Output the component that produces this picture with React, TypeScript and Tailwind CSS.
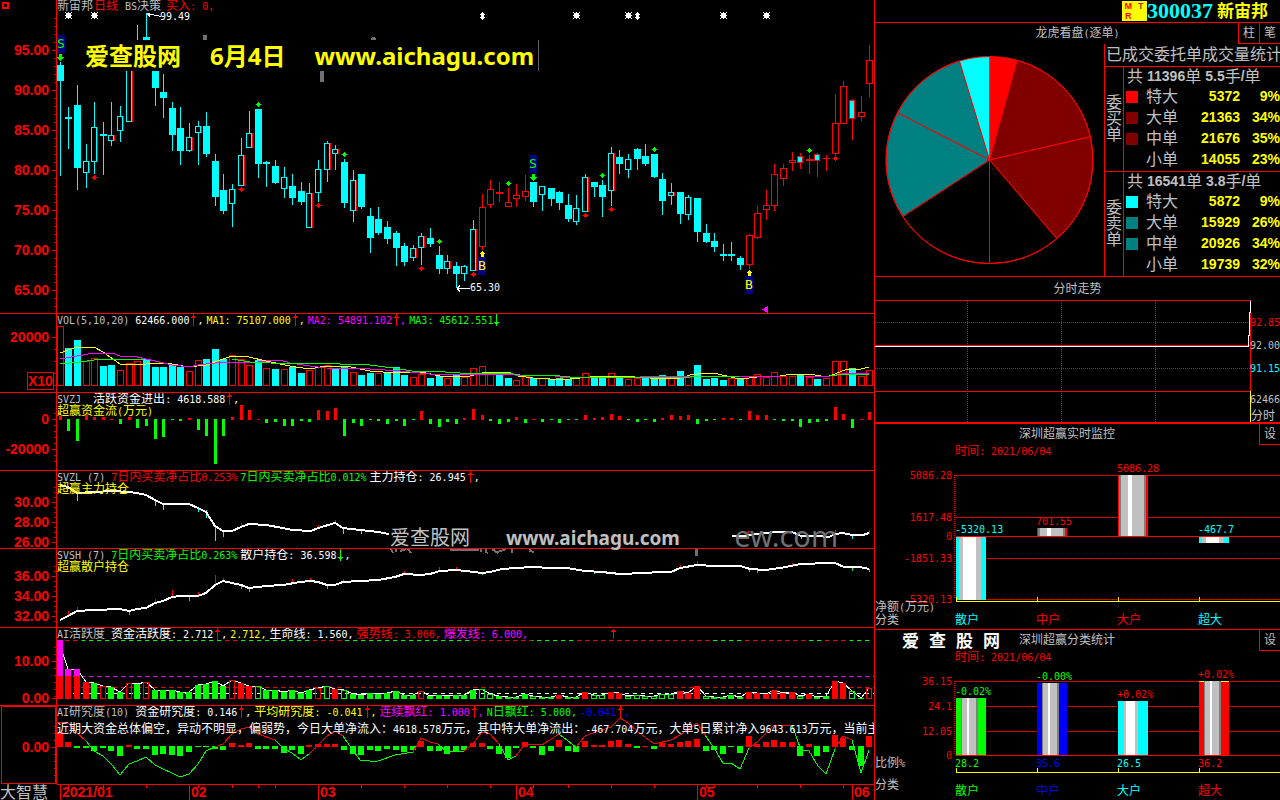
import React from 'react';

const RED = '#ff0000';
const CYAN = '#00ffff';
const LIME = '#00ff00';
const YELLOW = '#ffff00';
const MAGENTA = '#ff00ff';
const SILVER = '#c0c0c0';

// left edge and width of the plot area, in chart units
const PLOT_X = 57;
const PLOT_W = 817;

const barX = (i: number) => Math.floor(60.3 + i * 8.61);

type Kind = 'd' | 'u' | 'r' | 'm';
type Candle = [Kind, number, number, number, number];

// kind, high, body top, body bottom, low
const CANDLES: Candle[] = [
  ['d', 62, 65, 81, 176], ['d', 107, 117, 119, 149], ['d', 85, 105, 168, 190], ['u', 144, 161, 173, 188],
  ['u', 102, 127, 162, 174], ['d', 122, 134, 136, 175], ['u', 102, 135, 141, 146], ['u', 106, 116, 131, 142],
  ['u', 60, 66, 122, 122], ['d', 25, 45, 60, 60], ['d', 13, 37, 60, 65], ['d', 60, 65, 88, 106],
  ['d', 74, 92, 98, 118], ['d', 102, 108, 135, 151], ['d', 107, 128, 151, 165], ['u', 123, 137, 151, 152],
  ['u', 121, 126, 133, 165], ['d', 112, 126, 154, 157], ['d', 154, 161, 197, 206], ['d', 174, 190, 211, 214],
  ['u', 184, 189, 204, 227], ['u', 138, 155, 186, 186], ['u', 111, 133, 148, 148], ['d', 109, 109, 164, 178],
  ['d', 161, 162, 164, 187], ['d', 160, 166, 183, 184], ['u', 167, 177, 189, 198], ['d', 174, 186, 198, 205],
  ['d', 182, 191, 202, 205], ['u', 183, 193, 228, 228], ['u', 160, 169, 193, 202], ['u', 141, 143, 170, 182],
  ['u', 145, 149, 154, 170], ['d', 159, 162, 203, 208], ['u', 170, 180, 211, 222], ['d', 174, 174, 207, 209],
  ['d', 208, 216, 238, 253], ['d', 207, 219, 233, 235], ['d', 221, 227, 239, 244], ['d', 231, 233, 248, 266],
  ['d', 243, 246, 262, 266], ['u', 245, 248, 258, 261], ['u', 233, 236, 248, 265], ['d', 228, 238, 244, 247],
  ['d', 246, 255, 269, 274], ['u', 255, 261, 269, 274], ['d', 262, 266, 274, 288], ['u', 265, 266, 274, 281],
  ['u', 220, 229, 271, 271], ['r', 194, 207, 247, 250], ['r', 180, 189, 205, 208], ['r', 182, 192, 194, 202],
  ['r', 188, 202, 207, 207], ['r', 184, 195, 199, 207], ['r', 175, 191, 197, 201], ['d', 182, 182, 202, 207],
  ['u', 186, 186, 195, 211], ['d', 188, 188, 199, 206], ['d', 191, 192, 203, 210], ['d', 194, 205, 219, 222],
  ['u', 195, 208, 222, 225], ['u', 174, 177, 212, 212], ['d', 182, 182, 187, 197], ['d', 180, 185, 197, 217],
  ['u', 147, 153, 191, 206], ['d', 150, 157, 164, 174], ['u', 154, 159, 170, 178], ['d', 148, 149, 159, 170],
  ['d', 144, 156, 164, 166], ['d', 154, 154, 177, 178], ['d', 173, 179, 201, 215], ['u', 183, 192, 196, 205],
  ['d', 192, 192, 214, 224], ['u', 195, 197, 215, 220], ['d', 198, 198, 232, 242], ['d', 224, 233, 242, 243],
  ['d', 233, 241, 247, 252], ['d', 244, 254, 256, 261], ['d', 242, 254, 256, 261], ['d', 256, 258, 265, 270],
  ['r', 234, 235, 265, 269], ['r', 206, 213, 238, 239], ['r', 190, 205, 210, 220], ['r', 164, 174, 206, 211],
  ['r', 164, 168, 179, 186], ['r', 152, 160, 163, 171], ['m', 153, 156, 163, 169], ['r', 155, 159, 161, 174],
  ['m', 153, 154, 161, 177], ['r', 155, 158, 159, 171], ['r', 94, 123, 154, 156], ['r', 81, 86, 124, 124],
  ['m', 99, 100, 119, 140], ['r', 96, 112, 117, 121], ['r', 45, 60, 84, 97],
];

// candle index, y
const RED_DIAMONDS = [[4, 177], [21, 189], [30, 205], [42, 268], [48, 274], [61, 215], [64, 209], [90, 158]];
const GREEN_DIAMONDS = [[23, 104], [33, 154], [44, 241], [52, 183], [63, 175], [69, 149], [87, 150]];

// positive = rising (hollow red), negative = falling (cyan); the number is the top of the bar
const VOLUMES = [
  326, -348, -340, 361, 358, -366, -365, 370, 363, 361, -359, -367, -367, -364, -367, 371, 360, -359, -349, -359,
  355, 359, 365, -360, 368, -369, 369, -367, -373, 370, 367, 365, -369, -366, 372, -375, -373, 373, -372, -367,
  -375, 377, 374, -378, -376, 378, -375, 377, 368, 366, 373, -374, -378, 380, 376, -378, 378, -379, -378, -379,
  378, 373, -378, -378, 373, -377, 379, 378, -377, -378, -375, 377, -371, 377, -365, -379, -378, -380, 378, -379,
  376, 374, 377, 372, 376, 376, -375, 377, -379, 378, 361, 361, -368, 376, 370,
];

const FLOWS = [
  4, -12, -22, 5, 3, 3, 1, -5, 3, -9, -7, -20, -18, -1, -2, 2, -11, -17, -45, -17, 3, 15, 10, 1, -4, -3, -7, -7, -2,
  -3, 10, 9, 12, -17, -4, -7, -1, -2, -5, -2, -7, -1, 9, -5, -8, -3, -5, 2, 11, 5, -2, -5, -3, 3, -4, 1, -3, -1, -4,
  -1, -1, 5, 2, 3, 6, 4, -1, -3, -1, -3, 2, 5, 4, 5, -5, -2, -1, 2, 2, -1, 9, 5, 5, -1, -2, -2, -8, -4, -3, -2, 13,
  6, -9, 1, 8,
];

// R/G filled, r/g hollow
const ACTIVITY_KINDS =
  'RRRRGrGGrGrGGGGGGGGGrRRgGGGGGGrgRgGGGGGGGGrGGGGGGggGGGGgGGRgGRggRRggggggRRRggGGGRRRRRRgRGGRRgGr';
const ACTIVITY_TOPS = [
  640, 669, 669, 682, 683, 686, 687, 692, 683, 684, 682, 690, 690, 690, 692, 692, 685, 684, 681, 686, 680, 683, 686,
  686, 690, 690, 692, 690, 693, 690, 688, 686, 689, 690, 694, 695, 693, 694, 693, 691, 695, 695, 691, 696, 695, 696,
  695, 695, 690, 689, 694, 696, 697, 697, 694, 696, 697, 697, 695, 697, 697, 692, 695, 695, 692, 693, 696, 695, 696,
  696, 694, 694, 691, 693, 686, 696, 697, 697, 695, 697, 692, 693, 694, 690, 693, 692, 696, 694, 697, 696, 681, 683,
  691, 698, 688,
];

const RESEARCH = [
  15, 5, -2, -2, -5, -2, -5, -10, 2, -3, -3, -9, -8, -9, -10, -6, -1, -1, -3, -4, 4, 2, 4, -3, -3, -3, -7, -4, -8, 2,
  3, 3, 3, -4, -8, -9, -4, -5, -3, -4, -6, -4, 6, -5, -5, -8, -5, -4, 4, 4, -3, -8, -12, -2, 5, -2, -9, -5, 7, -5,
  -6, 6, 2, 2, 6, 7, 3, -2, 1, -3, 4, 3, 5, 6, 8, -5, -4, -8, -1, -7, 11, 3, 5, 7, 5, 5, -10, 3, -10, -6, 12, 9, -4,
  -20, 11,
];

const RESEARCH_LINES: [string, string][] = [
  [RED, '57,722 68,723 77,733 86,741'],
  [LIME, '86,741 94,751 103,756 112,765 120,775 129,764 137,761 146,757 155,765 163,769 172,773 180,777 189,774 198,764 206,751 215,747'],
  [RED, '215,747 223,744 232,734 241,729 249,727 258,734 275,740'],
  [LIME, '275,740 283,748 292,753 301,760 309,754'],
  [RED, '309,754 318,745 327,736 335,731 343,736'],
  [LIME, '343,736 352,749 360,760 370,761 378,761 395,755 413,752'],
  [RED, '413,752 421,738 430,742 438,744'],
  [LIME, '438,744 447,752 464,751'],
  [RED, '464,751 473,744 482,732 490,734 499,744'],
  [LIME, '499,744 508,760 516,756'],
  [RED, '516,756 525,744 542,745 559,734'],
  [LIME, '559,734 568,741 576,747'],
  [RED, '576,747 585,736 593,733 611,727 620,718 628,723 637,731 654,744 671,740 680,735 697,723 705,735'],
  [LIME, '705,735 714,748 723,763 731,763 740,769 749,748'],
  [RED, '749,748 757,742 774,725 792,725'],
  [LIME, '792,725 801,750 809,751 818,766 826,774 835,749'],
  [RED, '835,749 843,736 852,740'],
  [LIME, '852,740 861,773 869,750'],
];

const CJK = /([\u2018-\u201f\u3000-\u9fff\uff00-\uffef]+)/;

// Latin runs sit at half the width of the Chinese ones, as on a terminal
function Mixed({ text, as: Tag = 'span' }: { text: string; as?: 'span' | 'tspan' }): React.JSX.Element {
  return (
    <>
      {text.split(CJK).map((part, i) =>
        part === '' ? null : (
          <Tag key={i} className={i % 2 ? 'text-[12px]' : 'text-[10px]'}>
            {part}
          </Tag>
        )
      )}
    </>
  );
}

function Arrow({ down = false }: { down?: boolean }): React.JSX.Element {
  return (
    <svg
      width="8"
      height="12"
      viewBox="0 0 8 12"
      className={`inline-block align-top ${down ? 'rotate-180 text-[#00ff00]' : 'text-[#ff0000]'}`}
      shapeRendering="crispEdges"
    >
      <path d="M4 0h1v12h-1zM3 2h3v1h-3zM2 3h5v1h-5z" fill="currentColor" />
    </svg>
  );
}

interface LegendItem {
  text: string;
  color: string;
  arrow?: 'up' | 'down';
  comma?: boolean;
}

function Legend({ name, items }: { name: string; items: LegendItem[] }): React.JSX.Element {
  return (
    <div className="flex h-3 whitespace-pre leading-3">
      <span className="mr-1.5 text-[#c0c0c0]">
        <Mixed text={name} />
      </span>
      {items.map((item) => (
        <span key={item.text} className={`mr-[3px] ${item.color}`}>
          <Mixed text={item.text} />
          {item.arrow && <Arrow down={item.arrow === 'down'} />}
          {item.comma && <Mixed text="," />}
        </span>
      ))}
    </div>
  );
}

interface AxisProps {
  top: number;
  height: number;
  step: number;
  labels: [number, string][];
  framed?: boolean;
  unit?: boolean;
}

function Axis({ top, height, step, labels, framed, unit }: AxisProps): React.JSX.Element {
  const ticks: number[] = [];
  for (let y = labels[0][0]; y > top + 14; y -= step) ticks.push(y);
  for (let y = labels[0][0] + step; y < top + height - 4; y += step) ticks.push(y);
  return (
    <svg
      width="56"
      height={height}
      viewBox={`0 ${top} 56 ${height}`}
      className="block shrink-0 font-['Liberation_Sans',sans-serif] text-[14px] font-bold"
      fill={RED}
    >
      {ticks.map((y) => (
        <rect key={y} x="54" y={y} width="1" height="1" />
      ))}
      {labels.map(([y, text]) => (
        <g key={text}>
          <rect x="52" y={y} width="3" height="1" />
          <text x="49" y={y + 5} textAnchor="end">
            {text}
          </text>
        </g>
      ))}
      {framed && <rect x="1.5" y={top + 0.5} width="54" height={height - 1} fill="none" stroke={RED} />}
      {unit && (
        <>
          <rect x="27.5" y="372.5" width="26" height="17" fill="none" stroke={RED} />
          <text x="28" y="386">
            X10
          </text>
        </>
      )}
    </svg>
  );
}

interface PanelProps extends AxisProps {
  first?: boolean;
  header: React.ReactNode;
  overlay?: React.ReactNode;
  children: React.ReactNode;
}

function Panel({ first, header, overlay, children, ...axis }: PanelProps): React.JSX.Element {
  return (
    <section className={`flex ${first ? '' : 'border-t border-[#ff0000]'}`}>
      <Axis {...axis} />
      <div className="relative min-w-0 flex-1 border-l border-[#ff0000]">
        <svg
          className="block w-full"
          height={axis.height}
          viewBox={`${PLOT_X} ${axis.top} ${PLOT_W} ${axis.height}`}
          preserveAspectRatio="none"
          shapeRendering="crispEdges"
        >
          {children}
        </svg>
        <div className="absolute inset-x-0 top-0 overflow-hidden">{header}</div>
        {overlay}
      </div>
    </section>
  );
}

// keeps a label on its spot in the chart while the chart stretches
function Pin({ x, y, className = '', children }: { x: number; y: number; className?: string; children?: React.ReactNode }): React.JSX.Element {
  return (
    <div className={`absolute whitespace-pre ${className}`} style={{ left: `${((x - PLOT_X) / PLOT_W) * 100}%`, top: y }}>
      {children}
    </div>
  );
}

function Diamond({ i, y, color }: { i: number; y: number; color: string }): React.JSX.Element {
  const x = barX(i);
  return (
    <>
      <rect x={x - 2} y={y} width="5" height="1" fill={color} />
      <rect x={x - 1} y={y - 1} width="3" height="3" fill={color} />
      <rect x={x} y={y - 2} width="1" height="5" fill={color} />
      <rect x={x - 3} y={y} width="1" height="1" fill="#900000" />
      <rect x={x + 3} y={y} width="1" height="1" fill="#900000" />
    </>
  );
}

function CandleMark({ i, candle }: { i: number; candle: Candle }): React.JSX.Element {
  const [kind, high, top, bottom, low] = candle;
  const x = barX(i);
  const color = kind === 'd' || kind === 'u' ? CYAN : RED;
  const h = bottom - top;
  return (
    <>
      <rect x={x} y={high} width="1" height={low - high} fill={color} />
      {kind === 'd' && <rect x={x - 3} y={top} width="7" height={h} fill={CYAN} />}
      {kind === 'u' && (
        <>
          <rect x={x - 2.5} y={top + 0.5} width="5" height={h - 1} fill="#000" stroke={CYAN} />
          <rect x={x + 3} y={top} width="1" height={h} fill={RED} />
        </>
      )}
      {kind === 'r' && h > 2 && <rect x={x - 2.5} y={top + 0.5} width="6" height={h - 1} fill="#000" stroke={RED} />}
      {kind === 'r' && h <= 2 && <rect x={x - 3} y={top} width="7" height={h} fill={RED} />}
      {kind === 'm' && <rect x={x - 2.5} y={top + 0.5} width="5" height={h - 1} fill={CYAN} stroke={RED} />}
    </>
  );
}

function Star({ x }: { x: number }): React.JSX.Element {
  return <path d={`M${x - 2} 13h5v5h-5zM${x - 3} 12h1v1h-1zM${x} 12h1v7h-1zM${x + 3} 12h1v1h-1zM${x - 3} 15h7v1h-7zM${x - 3} 18h1v1h-1zM${x + 3} 18h1v1h-1z`} fill="#fff" />;
}

function Signal({ x, y, letter, color }: { x: number; y: number; letter: string; color: string }): React.JSX.Element {
  return (
    <Pin x={x} y={y} className={`h-[18px] w-2 bg-[#000080] text-center font-['DejaVu_Sans_Mono',monospace] text-[13px] leading-[18px] ${color}`}>
      {letter}
    </Pin>
  );
}

function PriceChart(): React.JSX.Element {
  return (
    <Panel
      first
      top={0}
      height={313}
      step={8}
      labels={[[50, '95.00'], [90, '90.00'], [130, '85.00'], [170, '80.00'], [210, '75.00'], [250, '70.00'], [290, '65.00']]}
      header={
        <div className="flex h-3 gap-px leading-3 text-[#c0c0c0]">
          <span><Mixed text="新宙邦" /></span>
          <span className="text-[#ff0000]"><Mixed text="日线" /></span>
          <span className="ml-1.5"><Mixed text="BS决策" /></span>
          <span className="ml-1 whitespace-pre text-[#ff0000]"><Mixed text="买入: 0," /></span>
        </div>
      }
      overlay={
        <>
          <Pin x={160} y={11} className="text-[10px] leading-3 text-white">99.49</Pin>
          <Pin x={470} y={282} className="text-[10px] leading-3 text-white">65.30</Pin>
          <Signal x={57} y={35} letter="S" color="text-[#00ff00]" />
          <Signal x={529} y={155} letter="S" color="text-[#00ff00]" />
          <Signal x={478} y={257} letter="B" color="text-[#ffff00]" />
          <Signal x={745} y={276} letter="B" color="text-[#ffff00]" />
          <Pin
            x={83}
            y={40}
            className="flex h-[31px] gap-[29px] border-r border-[#606060] bg-black pl-0.5 pr-1 font-['Noto_Sans','Noto_Sans_CJK_SC',sans-serif] text-[24px] font-bold leading-[31px] text-[#ffff00]"
          >
            <span>爱查股网</span>
            <span>6月4日</span>
            <span>www.aichagu.com</span>
          </Pin>
        </>
      }
    >
      {[68, 94, 576, 628, 723, 766].map((x) => <Star key={x} x={x} />)}
      {[482, 637].map((x) => <path key={x} d={`M${x} 12h1v8h-1zM${x - 1} 13h3v6h-3zM${x - 2} 14h5v1h-5zM${x - 2} 17h5v1h-5z`} fill="#fff" />)}
      <path d="M203 35h4v5h-4zM371 38h5v2h-5zM372 37h3v1h-3zM320 71h4v11h-4z" fill="#707070" />
      {CANDLES.map((candle, i) => <CandleMark key={i} i={i} candle={candle} />)}
      {RED_DIAMONDS.map(([i, y]) => <Diamond key={i} i={i} y={y} color={RED} />)}
      {GREEN_DIAMONDS.map(([i, y]) => <Diamond key={i} i={i} y={y} color={LIME} />)}
      <path d="M147 13.5l5 1 9 2M147 13.5l3 3M457 288.5h13M457 288.5l3-3M457 288.5l3 3" stroke="#fff" fill="none" />
      <path d="M59 54h3v3h2l-3.500 4-3.500-4h2zM532 174h3v3h2l-3.500 4-3.500-4h2z" fill={LIME} />
      <path d="M481 257h3v-3h2l-3.500-3-3.500 3h2zM748 276h3v-3h2l-3.500-3-3.500 3h2z" fill={YELLOW} />
      <path d="M768 306v7l-6-3.500z" fill={MAGENTA} />
    </Panel>
  );
}

function VolumeChart(): React.JSX.Element {
  return (
    <Panel
      top={314}
      height={78}
      step={12}
      unit
      labels={[[337, '20000']]}
      header={
        <Legend
          name="VOL(5,10,20)"
          items={[
            { text: '62466.000', color: 'text-white', arrow: 'up', comma: true },
            { text: 'MA1: 75107.000', color: 'text-[#ffff00]', arrow: 'up', comma: true },
            { text: 'MA2: 54891.102', color: 'text-[#ff00ff]', arrow: 'up', comma: true },
            { text: 'MA3: 45612.551', color: 'text-[#00ff00]', arrow: 'down' },
          ]}
        />
      }
    >
      {VOLUMES.map((v, i) =>
        v < 0 ? (
          <rect key={i} x={barX(i) - 3} y={-v} width="7" height={386 + v} fill={CYAN} />
        ) : (
          <rect key={i} x={barX(i) - 2.5} y={v + 0.5} width="6" height={385 - v} fill="none" stroke={RED} />
        )
      )}
      <g fill="none">
        <polyline stroke={YELLOW} points="60,353 68,350 77,347 94,347 103,352 120,364 137,365 155,363 172,364 189,367 206,365 223,359 232,356 249,357 266,361 290,366 309,369 326,366 351,367 370,371 395,373 421,372 440,376 466,377 482,373 508,372 518,376 533,378 550,379 570,379 590,377 620,376 650,378 680,378 690,375 705,373 718,374 735,378 742,379 757,377 780,376 792,374 815,375 827,377 845,370 861,369 869,367" />
        <polyline stroke={MAGENTA} points="60,359 77,356 94,353 112,353 120,356 137,357 155,361 172,365 189,367 198,365 223,362 258,362 266,361 280,360 290,363 310,366 326,368 370,369 400,371 430,374 490,374 515,375 550,375 565,378 640,377 690,376 720,376 780,377 805,377 830,376 848,373 869,373" />
        <polyline stroke={LIME} points="60,364 80,362 94,360 145,359 232,359 250,362 270,363 340,364 370,365 400,369 412,371 445,372 460,373 505,373 520,375 560,376 570,377 630,377 690,377 740,376 830,376 845,374 869,374" />
      </g>
    </Panel>
  );
}

function FlowChart(): React.JSX.Element {
  return (
    <Panel
      top={393}
      height={77}
      step={6}
      labels={[[419, '0'], [449, '-20000']]}
      header={
        <>
          <Legend name="SVZJ " items={[{ text: '活跃资金进出: 4618.588', color: 'text-white', arrow: 'up', comma: true }]} />
          <div className="h-[13px] leading-[13px] text-[#ffff00]"><Mixed text="超赢资金流(万元)" /></div>
        </>
      }
    >
      {FLOWS.map((v, i) => (
        <rect key={i} x={barX(i) - 1} y={v > 0 ? 420 - v : 419} width="3" height={Math.abs(v)} fill={v > 0 ? RED : LIME} />
      ))}
    </Panel>
  );
}

function HoldingChart(): React.JSX.Element {
  return (
    <Panel
      top={471}
      height={77}
      step={5}
      labels={[[502, '30.00'], [522, '28.00'], [542, '26.00']]}
      header={
        <>
          <Legend
            name="SVZL (7)"
            items={[
              { text: '7日内买卖净占比0.253%', color: 'text-[#ff0000]' },
              { text: '7日内买卖净占比0.012%', color: 'text-[#00ff00]' },
              { text: '主力持仓: 26.945', color: 'text-white', arrow: 'up', comma: true },
            ]}
          />
          <div className="h-[13px] leading-[13px] text-[#ffff00]"><Mixed text="超赢主力持仓" /></div>
        </>
      }
      overlay={
        <Pin
          x={389}
          y={57}
          className="flex h-5 w-[343px] gap-9 bg-black pl-px font-['Noto_Sans','Noto_Sans_CJK_SC',sans-serif] text-[19px] leading-5 text-[#c0c0c0]"
        >
          <span className="text-[20px]">爱查股网</span>
          <span className="font-bold">www.aichagu.com</span>
        </Pin>
      }
    >
      <path d="M77 493h1v8h-1zM155 500h1v6h-1zM163 503h1v7h-1zM198 507h1v5h-1zM206 510h1v8h-1zM215 526h1v15h-1zM223 530h1v7h-1zM343 527h1v7h-1zM361 530h1v4h-1zM801 535h1v4h-1zM852 535h1v4h-1z" fill={CYAN} />
      <path d="M241 523h1v4h-1zM318 525h1v4h-1zM335 520h1v4h-1zM748 531h1v4h-1zM835 530h1v4h-1zM869 530h1v4h-1z" fill={RED} />
      <g fill="none" stroke="#fff" strokeWidth="2">
        <polyline points="60,485 68,487 77,493 94,492 112,491 129,492 137,493 146,495 155,500 163,504 189,504 198,508 206,512 215,526 223,531 232,531 241,527 249,524 266,525 283,528 292,530 311,531 318,528 335,523 343,528 360,530 378,532 389,534" />
        <polyline points="732,536 744,536 757,534 775,532 792,532 801,536 817,536 829,537 835,534 843,533 852,535 863,535 869,533" />
      </g>
    </Panel>
  );
}

function RetailChart(): React.JSX.Element {
  return (
    <Panel
      top={549}
      height={78}
      step={5}
      labels={[[576, '36.00'], [596, '34.00'], [616, '32.00']]}
      header={
        <>
          <Legend
            name="SVSH (7)"
            items={[
              { text: '7日内买卖净占比0.263%', color: 'text-[#00ff00]' },
              { text: '散户持仓: 36.598', color: 'text-white', arrow: 'down', comma: true },
            ]}
          />
          <div className="h-[13px] leading-[13px] text-[#ffff00]"><Mixed text="超赢散户持仓" /></div>
        </>
      }
    >
      <g fill="none" stroke="#707070" strokeWidth="2">
        <path d="M391 549l2 4M396 549v3M400 551l6-2M408 549l3 4M450 550h29M481 549v3M486 549v3l2 1M492 549l6 4M498 552l8-3M512 549v4M530 549v2l4 1" />
        <path d="M696 549v7" strokeWidth="3" />
      </g>
      <path d="M68 611h1v5h-1zM77 607h1v4h-1zM155 599h1v4h-1zM172 590h1v7h-1zM198 592h1v4h-1zM215 575h1v10h-1zM223 578h1v4h-1zM292 579h1v4h-1zM310 578h1v3h-1zM343 579h1v4h-1zM404 571h1v4h-1zM439 567h1v4h-1zM456 567h1v3h-1zM680 565h1v4h-1zM697 561h1v5h-1zM792 563h1v4h-1z" fill={RED} />
      <path d="M129 611h1v4h-1zM189 597h1v4h-1zM241 585h1v4h-1zM249 588h1v4h-1zM327 585h1v4h-1zM482 573h1v2h-1zM594 571h1v3h-1zM749 569h1v3h-1zM757 569h1v4h-1zM852 567h1v4h-1zM869 569h1v3h-1z" fill={LIME} />
      <polyline
        fill="none"
        stroke="#fff"
        strokeWidth="2"
        points="60,620 68,616 77,611 94,610 120,609 129,611 137,609 146,608 155,603 163,601 172,597 180,596 198,596 206,593 215,585 223,581 232,583 241,585 249,588 266,586 283,585 300,582 311,581 318,582 327,585 335,585 343,582 360,581 378,580 395,577 404,574 421,575 430,574 440,571 456,570 466,571 482,573 490,572 502,569 516,568 533,567 550,568 567,568 585,571 602,572 620,574 645,573 660,572 671,572 680,568 697,565 715,566 740,566 750,569 765,570 780,568 801,564 830,563 835,563 844,567 860,567 869,569"
      />
    </Panel>
  );
}

function ActivityChart(): React.JSX.Element {
  return (
    <Panel
      top={628}
      height={77}
      step={7}
      labels={[[661, '10.00'], [698, '0.00']]}
      header={
        <Legend
          name="AI活跃度"
          items={[
            { text: '资金活跃度: 2.712', color: 'text-white', arrow: 'up', comma: true },
            { text: '2.712', color: 'text-[#ffff00]', comma: true },
            { text: '生命线: 1.560', color: 'text-white', comma: true },
            { text: '强势线: 3.000', color: 'text-[#ff0000]', comma: true },
            { text: '爆发线: 6.000', color: 'text-[#ff00ff]', comma: true },
          ]}
        />
      }
    >
      <path d="M57 693.500H874" stroke="#fff" strokeDasharray="4 4" />
      <path d="M57 687.500H874" stroke={RED} strokeDasharray="4 4" />
      <path d="M57 676.500H874" stroke={MAGENTA} strokeDasharray="4 4" />
      <path d="M57 640.500H869" stroke={LIME} strokeDasharray="4 4" />
      <path d="M57 640.500H82M225 640.500H241M313 640.500H345M473 640.500H532M577 640.500H712M745 640.500H808M825 640.500H850" stroke={RED} strokeDasharray="4 4" />
      <path d="M613 629h1v10h-1zM612 630h3v1h-3zM611 631h5v1h-5z" fill={RED} />
      <polyline fill="none" stroke="#fff" points={ACTIVITY_TOPS.map((y, i) => `${barX(i)},${y === 640 ? 645 : y}`).join(' ')} />
      {ACTIVITY_TOPS.map((y, i) => {
        const kind = ACTIVITY_KINDS[i];
        const color = kind.toUpperCase() === 'R' ? RED : LIME;
        return kind === kind.toUpperCase() ? (
          <rect key={i} x={barX(i) - 3} y={y} width="6" height={699 - y} fill={color} />
        ) : (
          <rect key={i} x={barX(i) - 2.5} y={y + 0.5} width="5" height={698 - y} fill="none" stroke={color} />
        );
      })}
      <path d="M57 640h6v36h-6zM65 669h6v7h-6zM74 669h6v7h-6z" fill={MAGENTA} />
    </Panel>
  );
}

function ResearchChart(): React.JSX.Element {
  return (
    <Panel
      top={706}
      height={78}
      step={7}
      framed
      labels={[[747, '0.00']]}
      header={
        <>
          <Legend
            name="AI研究度(10)"
            items={[
              { text: '资金研究度: 0.146', color: 'text-white', arrow: 'up', comma: true },
              { text: '平均研究度: -0.041', color: 'text-[#ffff00]', arrow: 'up', comma: true },
              { text: '连续飘红: 1.000', color: 'text-[#ff00ff]', arrow: 'up', comma: true },
              { text: 'N日飘红: 5.000', color: 'text-[#00ff00]', comma: true },
              { text: '-0.041', color: 'text-[#0000ff]', arrow: 'up', comma: true },
            ]}
          />
          <p className="mt-[5px] h-3.5 whitespace-nowrap leading-3 text-white">
            <Mixed text="近期大资金总体偏空，异动不明显，偏弱势，今日大单净流入：4618.578万元，其中特大单净流出：-467.704万元，大单5日累计净入9643.613万元，当前主" />
          </p>
        </>
      }
    >
      {RESEARCH.map((v, i) => (
        <rect key={i} x={barX(i) - 3} y={v > 0 ? 747 - v : 746} width="6" height={Math.abs(v)} fill={v > 0 ? RED : LIME} />
      ))}
      {RESEARCH_LINES.map(([color, points]) => (
        <polyline key={points} points={points} fill="none" stroke={color} />
      ))}
    </Panel>
  );
}

const MONTHS: [number, string][] = [[60, '2021/01'], [189, '02'], [318, '03'], [516, '04'], [697, '05'], [852, '06']];

function MonthAxis(): React.JSX.Element {
  return (
    <div className="flex h-4">
      <span className="w-14 shrink-0 text-[16px] leading-[18px] text-[#c0c0c0]">大智慧</span>
      <div className="relative min-w-0 flex-1 overflow-hidden border-l border-t border-l-transparent border-t-[#ff0000]">
        <svg className="block w-full" height="15" viewBox="57 785 817 15" preserveAspectRatio="none" shapeRendering="crispEdges" fill={RED}>
          {[68, 103, 146, 198, 232, 258, 275, 361, 404, 447, 490, 533, 568, 611, 654, 706, 714, 757, 800, 843].map((x) => (
            <rect key={x} x={x} y="785" width="1" height="3" />
          ))}
        </svg>
        {MONTHS.map(([x, label]) => (
          <Pin key={label} x={x} y={0} className="border-l border-[#ff0000] pl-px font-['Liberation_Sans',sans-serif] text-[14px] font-bold leading-[15px] text-[#ff0000]">
            {label}
          </Pin>
        ))}
      </div>
    </div>
  );
}

interface OrderRow {
  label: string;
  amount: number;
  share: string;
  color: string;
  swatch: string;
}

const BUYS: OrderRow[] = [
  { label: '特大', amount: 5372, share: '9%', color: '#ff0000', swatch: 'bg-[#ff0000]' },
  { label: '大单', amount: 21363, share: '34%', color: '#800000', swatch: 'bg-[#800000]' },
  { label: '中单', amount: 21676, share: '35%', color: '#800000', swatch: 'bg-[#800000]' },
  { label: '小单', amount: 14055, share: '23%', color: '#000', swatch: 'bg-black' },
];

const SELLS: OrderRow[] = [
  { label: '特大', amount: 5872, share: '9%', color: '#00ffff', swatch: 'bg-[#00ffff]' },
  { label: '大单', amount: 15929, share: '26%', color: '#008080', swatch: 'bg-[#008080]' },
  { label: '中单', amount: 20926, share: '34%', color: '#008080', swatch: 'bg-[#008080]' },
  { label: '小单', amount: 19739, share: '32%', color: '#000', swatch: 'bg-black' },
];

// buys run clockwise down the right half, sells mirror them on the left
function halfPie(rows: OrderRow[], side: 1 | -1): React.JSX.Element[] {
  const total = rows.reduce((sum, row) => sum + row.amount, 0);
  const at = (angle: number) => `${114.5 + side * 103.5 * Math.sin(angle)} ${116 - 103.5 * Math.cos(angle)}`;
  let from = 0;
  return rows.map((row) => {
    const to = from + (row.amount / total) * Math.PI;
    const d = `M114.5 116L${at(from)}A103.5 103.5 0 0 ${side === 1 ? 1 : 0} ${at(to)}Z`;
    from = to;
    return <path key={row.label} d={d} fill={row.color} stroke={row.amount < 6000 ? 'none' : RED} />;
  });
}

function OrderTable({ side, orders, average, rows }: { side: string; orders: string; average: string; rows: OrderRow[] }): React.JSX.Element {
  const num = "font-['Liberation_Sans',sans-serif] text-[14px] font-bold";
  return (
    <div className="flex border-t border-[#ff0000]">
      <div className="flex w-[18px] shrink-0 flex-col items-center justify-center text-[16px] leading-4">
        {side.split('').map((c) => <span key={c}>{c}</span>)}
      </div>
      <div className="flex-1 border-l border-[#ff0000] pb-px">
        <div className="flex h-[19px] items-center pl-[3px] text-[16px] leading-[19px]">
          <span>共</span>
          <span className={`ml-1 ${num}`}>{orders}</span>
          <span>单</span>
          <span className={`ml-1 ${num}`}>{average}</span>
          <span>手</span>
          <span className={num}>/</span>
          <span>单</span>
        </div>
        <table className="w-full">
          <tbody>
            {rows.map((row) => (
              <tr key={row.label} className="h-[21px]">
                <td className="w-[22px] p-0 pl-0.5">
                  <div className={`size-3 ${row.swatch}`} />
                </td>
                <th scope="row" className="p-0 text-left text-[16px] font-normal leading-[19px]">{row.label}</th>
                <td className={`p-0 text-right leading-[19px] text-[#ffff00] ${num}`}>{row.amount}</td>
                <td className={`w-10 p-0 text-right leading-[19px] text-[#ffff00] ${num}`}>{row.share}</td>
              </tr>
            ))}
          </tbody>
        </table>
      </div>
    </div>
  );
}

function TitleBar({ title, buttons = [] }: { title: string; buttons?: string[] }): React.JSX.Element {
  return (
    <div className="flex h-[21px]">
      <h2 className={`flex-1 text-center leading-[21px] ${buttons.length > 1 ? 'pl-[42px]' : ''}`}><Mixed text={title} /></h2>
      {buttons.map((label) => (
        <button key={label} type="button" className="h-[21px] w-[21px] border-b border-l border-[#ff0000] text-[12px] leading-5">
          {label}
        </button>
      ))}
    </div>
  );
}

// stripe edges across a 30px cylinder
const WIDE_GLOSS: [number, number, string][] = [[3, 22, SILVER], [7, 13, '#fff']];
const MID_GLOSS: [number, number, string][] = [[6, 14, SILVER], [8, 9, '#fff']];
const FULL_GLOSS: [number, number, string][] = [[1, 27, '#808080'], [3, 23, SILVER], [10, 4, '#fff']];
const THIN_GLOSS: [number, number, string][] = [[5, 17, '#808080'], [6, 14, SILVER], [11, 2, '#fff']];

function Cylinder({ x, top, bottom, color, gloss }: { x: number; top: number; bottom: number; color: string; gloss: [number, number, string][] }): React.JSX.Element {
  return (
    <>
      <rect x={x} y={top} width="30" height={bottom - top} fill={color} />
      {gloss.map(([dx, w, fill]) => (
        <rect key={dx} x={x + dx} y={top} width={w} height={bottom - top} fill={fill} />
      ))}
    </>
  );
}

function Label({ x, y, text, fill, end = false }: { x: number; y: number; text: string; fill: string; end?: boolean }): React.JSX.Element {
  return (
    <text x={x} y={y + 4} fill={fill} textAnchor={end ? 'end' : 'start'}>
      <Mixed as="tspan" text={text} />
    </text>
  );
}

function CategoryTicks({ y }: { y: number }): React.JSX.Element {
  return <path d={`M956 ${y}h324v1h-324zM956 ${y - 4}h1v4h-1zM1037 ${y - 4}h1v4h-1zM1118 ${y - 4}h1v4h-1zM1199 ${y - 4}h1v4h-1z`} fill={YELLOW} />;
}

function MonitorChart(): React.JSX.Element {
  return (
    <svg width="405" height="184" viewBox="875 445 405 184" className="block">
      <Label x={955} y={451} text="时间: 2021/06/04" fill={RED} />
      <g shapeRendering="crispEdges">
        <path d="M956 475.500H1280M956 517.500H1280M956 558.500H1280M956 599.500H1280M954.500 475V599" stroke={RED} strokeDasharray="1 1" />
        <Cylinder x={956} top={537} bottom={600} color={CYAN} gloss={WIDE_GLOSS} />
        <Cylinder x={1037} top={528} bottom={536} color={RED} gloss={FULL_GLOSS} />
        <Cylinder x={1118} top={475} bottom={536} color={RED} gloss={FULL_GLOSS} />
        <Cylinder x={1199} top={537} bottom={543} color={CYAN} gloss={WIDE_GLOSS} />
        <rect x="956" y="536" width="324" height="1" fill={RED} />
        <CategoryTicks y={601} />
      </g>
      <Label end x={952} y={475} text="5086.28" fill={RED} />
      <Label end x={952} y={517} text="1617.48" fill={RED} />
      <Label end x={952} y={536} text="0" fill={RED} />
      <Label end x={952} y={558} text="-1851.33" fill={RED} />
      <Label end x={952} y={599} text="-5320.13" fill={RED} />
      <Label x={955} y={529} text="-5320.13" fill={CYAN} />
      <Label x={1036} y={521} text="701.55" fill={RED} />
      <Label x={1117} y={468} text="5086.28" fill={RED} />
      <Label x={1198} y={529} text="-467.7" fill={CYAN} />
      <Label x={875} y={607} text="净额(万元)" fill={SILVER} />
      <Label x={875} y={620} text="分类" fill={SILVER} />
      <Label x={955} y={620} text="散户" fill={CYAN} />
      <Label x={1036} y={620} text="中户" fill={RED} />
      <Label x={1117} y={620} text="大户" fill={RED} />
      <Label x={1198} y={620} text="超大" fill={CYAN} />
    </svg>
  );
}

function ShareChart(): React.JSX.Element {
  return (
    <svg width="405" height="149" viewBox="875 651 405 149" className="block">
      <Label x={955} y={657} text="时间: 2021/06/04" fill={RED} />
      <g shapeRendering="crispEdges">
        <path d="M956 681.500H1280M956 706.500H1280M956 731.500H1280M954.500 681V755" stroke={RED} strokeDasharray="1 1" />
        <Cylinder x={956} top={698} bottom={755} color={LIME} gloss={THIN_GLOSS} />
        <Cylinder x={1037} top={683} bottom={755} color="#0000ff" gloss={THIN_GLOSS} />
        <Cylinder x={1118} top={701} bottom={755} color={CYAN} gloss={MID_GLOSS} />
        <Cylinder x={1199} top={681} bottom={755} color={RED} gloss={THIN_GLOSS} />
        <path d="M1199 681h5v1h-5zM1221 681h8v1h-8z" fill={YELLOW} />
        <rect x="956" y="755" width="324" height="1" fill={RED} />
        <CategoryTicks y={772} />
      </g>
      <Label end x={952} y={681} text="36.15" fill={RED} />
      <Label end x={952} y={706} text="24.1" fill={RED} />
      <Label end x={952} y={731} text="12.05" fill={RED} />
      <Label end x={952} y={755} text="0" fill={RED} />
      <Label x={955} y={691} text="-0.02%" fill={LIME} />
      <Label x={1036} y={676} text="-0.00%" fill={LIME} />
      <Label x={1117} y={694} text="+0.02%" fill={RED} />
      <Label x={1198} y={674} text="+0.02%" fill={RED} />
      <Label x={955} y={763} text="28.2" fill={LIME} />
      <Label x={1036} y={763} text="35.6" fill="#0000ff" />
      <Label x={1117} y={763} text="26.5" fill={CYAN} />
      <Label x={1198} y={763} text="36.2" fill={RED} />
      <Label x={875} y={763} text="比例%" fill={SILVER} />
      <Label x={875} y={785} text="分类" fill={SILVER} />
      <Label x={955} y={791} text="散户" fill={LIME} />
      <Label x={1036} y={791} text="中户" fill="#0000ff" />
      <Label x={1117} y={791} text="大户" fill={CYAN} />
      <Label x={1198} y={791} text="超大" fill={RED} />
    </svg>
  );
}

function IntradayChart(): React.JSX.Element {
  return (
    <svg width="405" height="122" viewBox="875 300 405 122" className="block">
      <g shapeRendering="crispEdges" fill="none">
        <path d="M875 322.500H1250M875 368.500H1250M967.500 301V422M1061.500 301V422M1155.500 301V422" stroke={RED} strokeDasharray="1 1" />
        <path d="M875 300.500H1250M875 345.500H1250M875 391.500H1250M1250.500 300V391" stroke={RED} />
        <path d="M1250.500 391V422" stroke={YELLOW} />
        <path d="M875 346.500H1248.500V335H1249.500V312H1250.500V301" stroke="#fff" />
      </g>
      <Label x={1250} y={322} text="92.85" fill={RED} />
      <Label x={1250} y={345} text="92.00" fill={SILVER} />
      <Label x={1250} y={368} text="91.15" fill={CYAN} />
      <Label x={1250} y={399} text="62466" fill={SILVER} />
      <Label x={1251} y={416} text="分时" fill={SILVER} />
    </svg>
  );
}

function QuotePanel(): React.JSX.Element {
  return (
    <aside className="w-[406px] shrink-0 overflow-hidden border-l border-[#ff0000] text-[#c0c0c0]">
      <header className="flex h-[22px] items-center justify-end pr-3">
        <div className="grid h-5 w-[25px] grid-cols-2 bg-[#ffff00] text-center font-['Liberation_Sans',sans-serif] text-[9px] font-bold leading-[10px] text-[#ff0000]">
          <span>M</span>
          <span className="text-[#a04020]">T</span>
          <span>R</span>
        </div>
        <span className="font-['Liberation_Serif',serif] text-[22px] font-bold leading-[22px] text-[#00ffff]">300037</span>
        <h1 className="ml-1 text-[17px] font-bold leading-[22px] text-[#ffff00]">新宙邦</h1>
      </header>

      <section className="border-t border-[#ff0000]">
        <TitleBar title="龙虎看盘(逐单)" buttons={['柱', '笔']} />
        <div className="flex">
          <svg width="229" height="232" viewBox="0 0 229 232" className="block shrink-0">
            {halfPie(BUYS, 1)}
            {halfPie(SELLS, -1)}
            <circle cx="114.5" cy="116" r="103.5" fill="none" stroke={RED} />
          </svg>
          <div className="min-w-0 flex-1 overflow-hidden border-l border-[#ff0000]">
            <h3 className="h-[22px] whitespace-nowrap pl-px text-[16px] leading-[22px]">已成交委托单成交量统计</h3>
            <OrderTable side="委买单" orders="11396" average="5.5" rows={BUYS} />
            <OrderTable side="委卖单" orders="16541" average="3.8" rows={SELLS} />
          </div>
        </div>
      </section>

      <section className="border-t border-[#ff0000] pt-0.5">
        <TitleBar title="分时走势" />
        <IntradayChart />
      </section>

      <section className="border-t-2 border-[#ff0000]">
        <TitleBar title="深圳超赢实时监控" buttons={['设']} />
        <MonitorChart />
      </section>

      <section className="relative border-t border-[#ff0000]">
        <TitleBar title="深圳超赢分类统计" buttons={['设']} />
        <div className="absolute left-[27px] top-0.5 flex gap-2.5 text-[17px] font-bold leading-[18px] text-white">
          <span>爱</span>
          <span>查</span>
          <span>股</span>
          <span>网</span>
        </div>
        <ShareChart />
      </section>
    </aside>
  );
}

export default function App(): React.JSX.Element {
  return (
    <div className="flex min-h-screen bg-black font-['DejaVu_Sans_Mono','Noto_Sans_CJK_SC',monospace] text-[12px]">
      <main className="relative min-w-0 flex-1 overflow-hidden">
        <PriceChart />
        <VolumeChart />
        <FlowChart />
        <div className="relative">
          <HoldingChart />
          <span className="absolute bottom-0 right-9 font-['Noto_Sans',sans-serif] text-[29px] leading-6 text-[#707070]">ew.com</span>
        </div>
        <RetailChart />
        <ActivityChart />
        <ResearchChart />
        <MonthAxis />
        <span className="absolute left-0.5 top-0.5 size-[7px] border-2 border-[#ff0000]" />
      </main>
      <QuotePanel />
    </div>
  );
}
